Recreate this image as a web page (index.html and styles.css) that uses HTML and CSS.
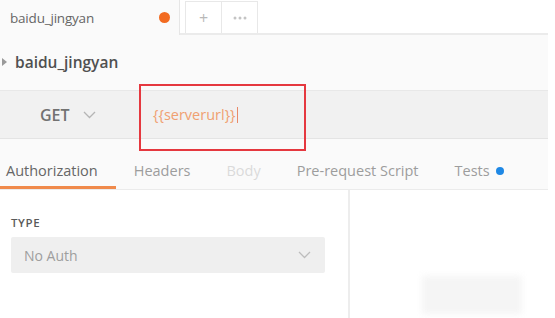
FILE: index.html
```html
<!DOCTYPE html>
<html lang="en">
<head>
    <meta charset="UTF-8">
    <title>baidu_jingyan</title>
    <link rel="stylesheet" href="styles.css">
</head>
<body>
    <div class="app">
        <div class="tabbar">
            <div class="tab active">
                <span class="tab-name">baidu_jingyan</span>
                <span class="dot"></span>
            </div>
            <div class="tab-btn plus">+</div>
            <div class="tab-btn more">
                <svg width="14" height="4" viewBox="0 0 14 4"><circle cx="2" cy="2" r="1.5"/><circle cx="7" cy="2" r="1.5"/><circle cx="12" cy="2" r="1.5"/></svg>
            </div>
        </div>

        <div class="title">
            <span class="caret"></span>
            <span>baidu_jingyan</span>
        </div>

        <div class="request">
            <div class="method">
                GET
                <svg width="13" height="8" viewBox="0 0 13 8"><path d="M1 1 L6.5 6.5 L12 1" fill="none" stroke="#b5b5b5" stroke-width="1.3"/></svg>
            </div>
            <div class="url">{{serverurl}}<span class="cursor"></span></div>
            <div class="highlight"></div>
        </div>

        <div class="tabs">
            <div class="req-tab active">Authorization</div>
            <div class="req-tab">Headers</div>
            <div class="req-tab disabled">Body</div>
            <div class="req-tab">Pre-request Script</div>
            <div class="req-tab">Tests <span class="blue-dot"></span></div>
        </div>

        <div class="panels">
            <div class="left">
                <div class="label">TYPE</div>
                <div class="select">
                    <span>No Auth</span>
                    <svg width="13" height="8" viewBox="0 0 13 8"><path d="M1 1 L6.5 6.5 L12 1" fill="none" stroke="#bdbdbd" stroke-width="1.3"/></svg>
                </div>
            </div>
            <div class="right">
                <div class="smudge"></div>
            </div>
        </div>
    </div>
</body>
</html>
```

FILE: styles.css
```css
body {
    margin: 0;
    background-color: #ffffff;
    font-family: 'Open Sans', 'Liberation Sans', sans-serif;
    overflow: hidden;
}

.app {
    width: 548px;
    height: 318px;
    background-color: #fafafa;
    display: flex;
    flex-direction: column;
}

/* top tab strip */
.tabbar {
    height: 35px;
    display: flex;
    align-items: flex-end;
    background-color: #ffffff;
    border-bottom: 2px solid #ebebeb;
    box-sizing: border-box;
}

.tab {
    width: 180px;
    height: 35px;
    box-sizing: border-box;
    display: flex;
    align-items: center;
    justify-content: space-between;
    padding: 0 9px 0 10px;
    background-color: #fafafa;
    border-right: 1px solid #e6e6e6;
    margin-bottom: -2px;
}

.tab-name {
    font-size: 13.5px;
    color: #666666;
    letter-spacing: -0.2px;
}

.dot {
    width: 11px;
    height: 11px;
    border-radius: 50%;
    background-color: #f26b21;
}

.tab-btn {
    width: 36px;
    height: 32px;
    box-sizing: border-box;
    border: 1px solid #e8e8e8;
    border-bottom: none;
    display: flex;
    align-items: center;
    justify-content: center;
    font-size: 16px;
    color: #b8b8b8;
    background-color: #ffffff;
}

.tab-btn.plus {
    margin-left: 5px;
    width: 37px;
}

.tab-btn.more {
    border-left: none;
    fill: #c4c4c4;
}

/* request name */
.title {
    height: 55px;
    display: flex;
    align-items: center;
    padding-bottom: 1px;
    box-sizing: border-box;
    font-size: 15.5px;
    font-weight: 600;
    color: #505050;
}

.caret {
    width: 0;
    height: 0;
    border-top: 4px solid transparent;
    border-bottom: 4px solid transparent;
    border-left: 5px solid #9a9a9a;
    margin: 0 8px 0 2px;
}

/* url row */
.request {
    position: relative;
    height: 47px;
    display: flex;
    align-items: center;
    background-color: #f1f1f1;
    border-top: 1px solid #e8e8e8;
    border-bottom: 1px solid #e4e4e4;
}

.method {
    width: 153px;
    box-sizing: border-box;
    padding-left: 40px;
    display: flex;
    align-items: center;
    gap: 13px;
    font-size: 16px;
    font-weight: 600;
    color: #727272;
}

.url {
    display: flex;
    align-items: center;
    font-size: 14.5px;
    color: #f0a070;
}

.cursor {
    width: 1px;
    height: 16px;
    background-color: #e88a6a;
    margin-left: 1px;
}

.highlight {
    position: absolute;
    left: 139px;
    top: -7px;
    width: 167px;
    height: 67px;
    box-sizing: border-box;
    border: 2px solid #e5383f;
}

/* request tabs */
.tabs {
    margin-top: 16px;
    height: 35px;
    display: flex;
    border-bottom: 1px solid #ebebeb;
    box-sizing: border-box;
    font-size: 14.5px;
    color: #9d9d9d;
}

.req-tab {
    display: flex;
    align-items: center;
    padding-bottom: 3px;
    margin-right: 36px;
    white-space: nowrap;
}

.req-tab.active {
    color: #666666;
    padding: 0 18px 0 6px;
    margin-right: 18px;
    border-bottom: 3px solid #f08a4b;
}

.req-tab.disabled {
    color: #dadada;
}

.blue-dot {
    width: 8px;
    height: 8px;
    border-radius: 50%;
    background-color: #1e88e5;
    margin-left: 6px;
}

/* auth panel */
.panels {
    flex: 1;
    display: flex;
    background-color: #ffffff;
}

.left {
    width: 350px;
    border-right: 2px solid #ededed;
    padding: 25px 0 0 11px;
    box-sizing: border-box;
}

.label {
    font-size: 11.5px;
    font-weight: 600;
    letter-spacing: 0.6px;
    color: #5a5a5a;
    margin-bottom: 7px;
}

.select {
    width: 314px;
    height: 36px;
    box-sizing: border-box;
    background-color: #efefef;
    border-radius: 2px;
    display: flex;
    align-items: center;
    justify-content: space-between;
    padding: 0 14px 0 13px;
    font-size: 14px;
    color: #9e9e9e;
}

.right {
    flex: 1;
    position: relative;
}

.smudge {
    position: absolute;
    left: 72px;
    top: 86px;
    width: 100px;
    height: 38px;
    background-color: #f5f5f5;
    filter: blur(3px);
}
```
